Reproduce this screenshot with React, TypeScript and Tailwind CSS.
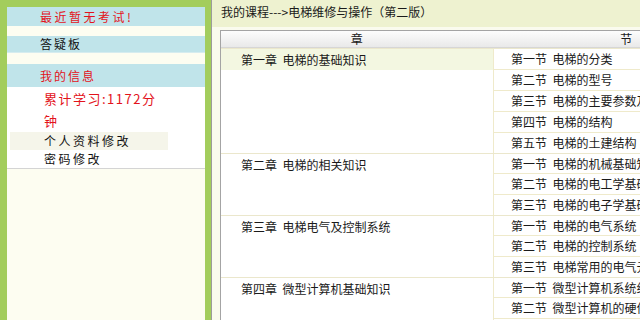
import React from 'react';

const chapters = [
  {
    title: '第一章  电梯的基础知识',
    sections: ['第一节  电梯的分类', '第二节  电梯的型号', '第三节  电梯的主要参数及常用术语', '第四节  电梯的结构', '第五节  电梯的土建结构'],
  },
  {
    title: '第二章  电梯的相关知识',
    sections: ['第一节  电梯的机械基础知识', '第二节  电梯的电工学基础知识', '第三节  电梯的电子学基础知识'],
  },
  {
    title: '第三章  电梯电气及控制系统',
    sections: ['第一节  电梯的电气系统', '第二节  电梯的控制系统', '第三节  电梯常用的电气元件'],
  },
  {
    title: '第四章  微型计算机基础知识',
    sections: ['第一节  微型计算机系统组成', '第二节  微型计算机的硬件系统', '第三节  微型计算机的软件系统'],
  },
];

function Sidebar() {
  return (
    <aside className="ml-[7px] mt-[7px] flex w-[198px] shrink-0 flex-col bg-[#fdfdf1]">
      <div className="flex h-[19px] items-center bg-[#c0e4ea] pl-[33px] tracking-[2.5px] text-[#e3131b]">
        最近暂无考试!
      </div>
      <div className="h-[10px]" />
      <div className="flex h-[17px] items-center border-b border-[#d6ecef] bg-[#c0e4ea] pl-[33px] tracking-[2px] text-[#111]">
        答疑板
      </div>
      <div className="h-[11px]" />
      <div className="flex h-[23px] items-center bg-[#c0e4ea] pl-[33px] tracking-[2px] text-[#e3131b]">
        我的信息
      </div>
      <div className="flex flex-col border-b border-[#d4d4d4] bg-white pt-[1px]">
        <div className="ml-[37px] w-[124px] text-[13px] leading-[22px] tracking-[1.5px] text-[#e3131b]">
          累计学习:1172分钟
        </div>
        <div className="ml-[3px] w-[158px]">
          <div className="flex h-[18px] items-center bg-[#f5f5ea] pl-[34px] tracking-[2.5px] text-[#111]">个人资料修改</div>
          <div className="flex h-[18px] items-center pl-[34px] tracking-[2.5px] text-[#111]">密码修改</div>
        </div>
      </div>
    </aside>
  );
}

function ChapterBlock({ title, sections, first }: { title: string; sections: string[]; first: boolean }) {
  return (
    <div className="flex border-t border-[#ebe7cc] first:border-t-0">
      <div className="w-[272px] shrink-0">
        <div className={`flex h-[21px] items-center whitespace-pre pl-[20px] ${first ? 'bg-[#f3f7e1]' : ''}`}>{title}</div>
      </div>
      <div className="w-[268px] shrink-0 border-l border-[#efeacb]">
        {sections.map((s, i) => (
          <div
            key={s}
            className={`flex items-center whitespace-pre pl-[17px] ${
              i > 0 ? 'h-[21px] border-t border-[#efeacb]' : first ? 'h-[20px]' : 'h-[19px]'
            }`}
          >
            {s}
          </div>
        ))}
      </div>
    </div>
  );
}

export default function App() {
  return (
    <div className="flex h-[320px] w-[640px] overflow-hidden bg-[#a3cd5c] font-['Noto_Sans_CJK_SC',sans-serif] text-[12px] text-[#1a1a1a]">
      <Sidebar />
      <div className="w-[6px] shrink-0" />
      <main className="min-w-0 flex-1 overflow-hidden border-l border-[#9c9c9c] bg-[#fafbee]">
        <div className="h-[27px] whitespace-nowrap bg-[#eef2d0] pl-[9px] pt-[5px] leading-[14px]">
          我的课程---&gt;电梯维修与操作（第二版）
        </div>
        <div className="ml-[8px] mt-[3px] w-[540px] border-l border-t border-[#a4a4a4] bg-white">
          <div className="flex h-[17px] border-b border-[#d6d6d6] bg-gradient-to-b from-[#fdfdfd] to-[#e9e9e9]">
            <div className="flex w-[272px] items-center justify-center">章</div>
            <div className="flex w-[268px] items-center justify-center">节</div>
          </div>
          {chapters.map((c, i) => (
            <ChapterBlock key={c.title} title={c.title} sections={c.sections} first={i === 0} />
          ))}
        </div>
      </main>
    </div>
  );
}
